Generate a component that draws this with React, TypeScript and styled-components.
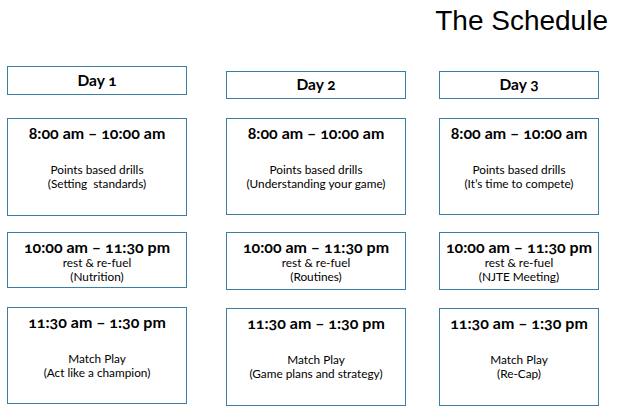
import React from "react";
import styled, { createGlobalStyle } from "styled-components";

const GlobalStyle = createGlobalStyle`
  html, body {
    margin: 0;
    padding: 0;
    background: #ffffff;
  }
  body {
    font-family: Lato, "Open Sans", sans-serif;
    color: #000;
  }
`;

type Slot = {
  time: string;
  lines: string[];
  height: number;
  gap: number;
};

type Day = {
  label: string;
  width: number;
  offset: number;
  headTop: number;
  headHeight: number;
  headGap: number;
  slots: Slot[];
};

const days: Day[] = [
  {
    label: "Day 1",
    width: 180,
    offset: 7,
    headTop: 66,
    headHeight: 29,
    headGap: 23,
    slots: [
      { time: "8:00 am – 10:00 am", lines: ["Points based drills", "(Setting  standards)"], height: 98, gap: 16 },
      { time: "10:00 am – 11:30 pm", lines: ["rest & re-fuel", "(Nutrition)"], height: 56, gap: 19 },
      { time: "11:30 am – 1:30 pm", lines: ["Match Play", "(Act like a champion)"], height: 97, gap: 0 },
    ],
  },
  {
    label: "Day 2",
    width: 180,
    offset: 39,
    headTop: 71,
    headHeight: 28,
    headGap: 19,
    slots: [
      { time: "8:00 am – 10:00 am", lines: ["Points based drills", "(Understanding your game)"], height: 97, gap: 17 },
      { time: "10:00 am – 11:30 pm", lines: ["rest & re-fuel", "(Routines)"], height: 58, gap: 18 },
      { time: "11:30 am – 1:30 pm", lines: ["Match Play", "(Game plans and strategy)"], height: 98, gap: 0 },
    ],
  },
  {
    label: "Day 3",
    width: 160,
    offset: 33,
    headTop: 71,
    headHeight: 28,
    headGap: 19,
    slots: [
      { time: "8:00 am – 10:00 am", lines: ["Points based drills", "(It’s time to compete)"], height: 97, gap: 17 },
      { time: "10:00 am – 11:30 pm", lines: ["rest & re-fuel", "(NJTE Meeting)"], height: 58, gap: 18 },
      { time: "11:30 am – 1:30 pm", lines: ["Match Play", "(Re-Cap)"], height: 98, gap: 0 },
    ],
  },
];

export default function App() {
  return (
    <Page>
      <GlobalStyle />
      <TitleBar>
        <Title>The Schedule</Title>
      </TitleBar>
      <Columns>
        {days.map((day) => (
          <Column key={day.label} $width={day.width} $offset={day.offset} $top={day.headTop}>
            <DayBox $height={day.headHeight} $gap={day.headGap}>
              {day.label}
            </DayBox>
            {day.slots.map((slot) => (
              <SlotBox key={slot.time} $height={slot.height} $gap={slot.gap}>
                <Time>{slot.time}</Time>
                <Body $spaced={slot.height > 80}>
                  {slot.lines.map((line) => (
                    <Line key={line}>{line}</Line>
                  ))}
                </Body>
              </SlotBox>
            ))}
          </Column>
        ))}
      </Columns>
    </Page>
  );
}

const Page = styled.div`
  width: 627px;
  height: 409px;
  position: relative;
  overflow: hidden;
`;

const TitleBar = styled.div`
  position: absolute;
  top: 5px;
  right: 19px;
`;

const Title = styled.h1`
  margin: 0;
  font-family: "Liberation Sans", Arial, sans-serif;
  font-weight: 400;
  font-size: 28px;
  line-height: 32px;
  color: #000;
`;

const Columns = styled.div`
  display: flex;
  align-items: flex-start;
`;

const Column = styled.div<{ $width: number; $offset: number; $top: number }>`
  display: flex;
  flex-direction: column;
  width: ${(p) => p.$width}px;
  margin-left: ${(p) => p.$offset}px;
  padding-top: ${(p) => p.$top}px;
`;

const Box = styled.div`
  box-sizing: border-box;
  border: 1.5px solid #3a7ea4;
  background: #fff;
  text-align: center;
`;

const DayBox = styled(Box)<{ $height: number; $gap: number }>`
  height: ${(p) => p.$height}px;
  margin-bottom: ${(p) => p.$gap}px;
  display: flex;
  align-items: center;
  justify-content: center;
  font-weight: 700;
  font-size: 15.5px;
  font-variant-numeric: oldstyle-nums;
  padding-bottom: 2px;
`;

const SlotBox = styled(Box)<{ $height: number; $gap: number }>`
  height: ${(p) => p.$height}px;
  margin-bottom: ${(p) => p.$gap}px;
  padding-top: 4px;
`;

const Time = styled.div`
  font-weight: 700;
  font-size: 16px;
  line-height: 19px;
  font-variant-numeric: oldstyle-nums;
`;

const Body = styled.div<{ $spaced: boolean }>`
  margin-top: ${(p) => (p.$spaced ? 21 : 0)}px;
  font-size: 11.8px;
  line-height: 14px;
`;

const Line = styled.div`
  white-space: pre;
`;
